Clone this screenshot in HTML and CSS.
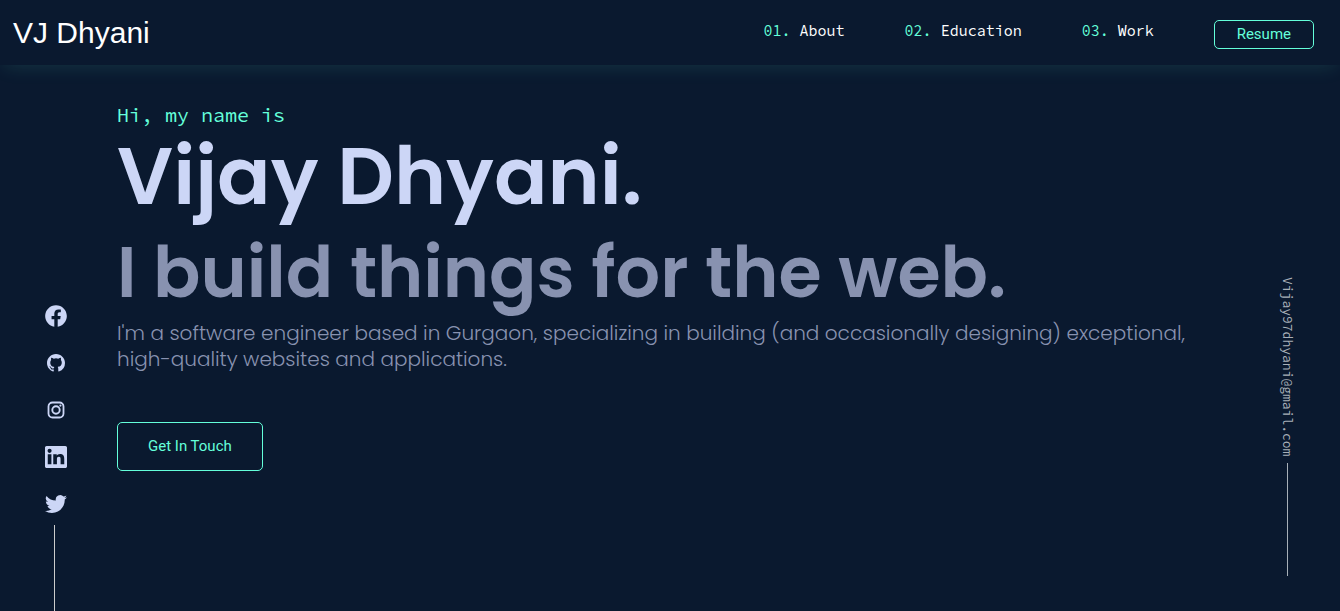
FILE: index.html
```html
<!DOCTYPE html>
<html lang="en">
<head>
<meta charset="utf-8">
<meta name="viewport" content="width=device-width, initial-scale=1">
<title>VJ Dhyani</title>
<link rel="stylesheet" href="styles.css">
</head>
<body>
<header class="header">
  <a class="logo" href="#">VJ Dhyani</a>
  <nav class="nav">
    <a class="nav-link" href="#about"><span class="nav-number">01.</span> About</a>
    <a class="nav-link" href="#education"><span class="nav-number">02.</span> Education</a>
    <a class="nav-link" href="#work"><span class="nav-number">03.</span> Work</a>
    <button class="button button-small" type="button">Resume</button>
  </nav>
</header>
<div class="page">
  <aside class="social">
    <a class="social-link" href="#" aria-label="Facebook"><svg width="26" height="26" viewBox="0 0 24 24"><path d="M12.001 2.002c-5.522 0-9.999 4.477-9.999 9.999 0 4.990 3.656 9.126 8.437 9.879v-6.988h-2.540v-2.891h2.540V9.798c0-2.508 1.493-3.891 3.776-3.891 1.094 0 2.240.195 2.240.195v2.459h-1.264c-1.240 0-1.628.772-1.628 1.563v1.875h2.771l-.443 2.891h-2.328v6.988C18.344 21.129 22 16.992 22 12.001c0-5.522-4.477-9.999-9.999-9.999z"/></svg></a>
    <a class="social-link" href="#" aria-label="GitHub"><svg width="18" height="18" viewBox="0 0 16 16"><path d="M8 0C3.580 0 0 3.580 0 8c0 3.540 2.290 6.530 5.470 7.590.4.070.55-.17.55-.38 0-.19-.01-.82-.01-1.490-2.010.37-2.530-.49-2.690-.94-.09-.23-.48-.94-.82-1.130-.28-.15-.68-.52-.01-.53.63-.01 1.080.58 1.230.82.72 1.210 1.870.87 2.330.66.070-.52.28-.87.51-1.070-1.780-.2-3.640-.89-3.640-3.950 0-.87.31-1.590.82-2.150-.08-.2-.36-1.020.08-2.120 0 0 .67-.21 2.200.82a7.600 7.600 0 0 1 4 0c1.530-1.040 2.200-.82 2.200-.82.44 1.100.16 1.920.08 2.120.51.56.82 1.270.82 2.150 0 3.070-1.870 3.750-3.650 3.950.29.25.54.73.54 1.480V15.200c0 .21.15.46.55.38A8.010 8.010 0 0 0 16 8c0-4.420-3.580-8-8-8z"/></svg></a>
    <a class="social-link" href="#" aria-label="Instagram"><svg width="26" height="26" viewBox="0 0 26 26"><rect x="5.500" y="5.500" width="15" height="15" rx="4" fill="none" stroke="currentColor" stroke-width="1.800"/><circle cx="13" cy="13" r="3.700" fill="none" stroke="currentColor" stroke-width="1.900"/><circle cx="17.400" cy="8.600" r="1.100"/></svg></a>
    <a class="social-link" href="#" aria-label="LinkedIn"><svg width="22" height="22" viewBox="0 0 24 24"><path d="M22.200 0H1.800C.8 0 0 .8 0 1.700v20.600c0 .9.8 1.700 1.800 1.700h20.400c1 0 1.800-.8 1.800-1.700V1.700C24 .8 23.200 0 22.200 0zM7 20H3V9h4v11zM5 7.500a2.200 2.200 0 1 1 0-4.500 2.200 2.200 0 0 1 0 4.500zM21 20h-4v-5.400c0-1.400 0-2.900-1.900-2.900s-2.100 1.400-2.100 2.900V20H9V9h3.800v1.500c.6-1 1.800-1.800 3.600-1.800 3.800 0 4.600 2.400 4.600 5.500V20z"/></svg></a>
    <a class="social-link" href="#" aria-label="Twitter"><svg width="22" height="22" viewBox="0 0 24 24"><path d="M24 4.557a9.830 9.830 0 0 1-2.828.775 4.932 4.932 0 0 0 2.165-2.724 9.864 9.864 0 0 1-3.127 1.195 4.916 4.916 0 0 0-8.384 4.482A13.944 13.944 0 0 1 1.671 3.149a4.916 4.916 0 0 0 1.523 6.574 4.903 4.903 0 0 1-2.229-.616c-.054 2.281 1.581 4.415 3.949 4.890a4.935 4.935 0 0 1-2.224.084 4.928 4.928 0 0 0 4.600 3.419A9.900 9.900 0 0 1 0 19.540a13.940 13.940 0 0 0 7.548 2.212c9.142 0 14.307-7.721 13.995-14.646A10.025 10.025 0 0 0 24 4.557z"/></svg></a>
    <span class="social-line"></span>
  </aside>
  <main class="hero">
    <p class="greeting">Hi, my name is</p>
    <h1 class="name">Vijay Dhyani.</h1>
    <h2 class="tagline">I build things for the web.</h2>
    <p class="intro">I'm a software engineer based in Gurgaon, specializing in building (and occasionally designing) exceptional, high-quality websites and applications.</p>
    <button class="button button-large" type="button">Get In Touch</button>
  </main>
  <aside class="contact">
    <a class="email" href="mailto:Vijay97dhyani@gmail.com">Vijay97dhyani@gmail.com</a>
    <span class="contact-line"></span>
  </aside>
</div>
</body>
</html>
```
FILE: styles.css
```css
* {
  box-sizing: border-box;
}

body {
  margin: 0;
  min-height: 100vh;
  display: flex;
  flex-direction: column;
  background: #0a192f;
  color: #ccd6f6;
  font-family: Poppins, Inter, sans-serif;
}

a {
  color: inherit;
  text-decoration: none;
}

h1, h2, p {
  margin: 0;
}

.header {
  display: flex;
  justify-content: space-between;
  align-items: flex-start;
  min-height: 65px;
  padding: 0 26px 0 13px;
  box-shadow: 0 5px 20px -4px rgba(100, 255, 218, 0.13);
}

.logo {
  padding-top: 15px;
  color: #fff;
  font: 30px/36px "Liberation Sans", Arial, sans-serif;
}

.nav {
  display: flex;
  align-items: flex-start;
  gap: 60px;
  padding-top: 20px;
}

.nav-link {
  color: #fff;
  font: 15px/22px "Source Code Pro", "Liberation Mono", monospace;
}

.nav-number {
  color: #64ffda;
}

.button {
  border: 1px solid #64ffda;
  border-radius: 5px;
  background: transparent;
  color: #64ffda;
  font: 15px/17px Roboto, sans-serif;
  cursor: pointer;
}

.button-small {
  padding: 5px 22px;
}

.button-large {
  margin-top: 50px;
  padding: 15px 30px;
}

.page {
  flex: 1;
  display: grid;
  grid-template-columns: 117px 1fr 80px;
}

.social {
  display: flex;
  flex-direction: column;
  justify-content: flex-end;
  align-items: center;
  gap: 21px;
  padding-right: 5px;
}

.social-link {
  display: flex;
  align-items: center;
  justify-content: center;
  width: 26px;
  height: 26px;
}

.social-link svg {
  fill: currentColor;
}

.social-line {
  width: 1px;
  height: 86px;
  margin: -13px 3px 0 0;
  background: #ccc;
}

.hero {
  padding: 37px 60px 40px 0;
}

.greeting {
  color: #64ffda;
  font: 20px/26px "Source Code Pro", "Liberation Mono", monospace;
}

.name {
  font-size: 79px;
  font-weight: 600;
  line-height: 98px;
}

.tagline {
  color: #8892b0;
  font-size: 70px;
  font-weight: 600;
  line-height: 94px;
}

.intro {
  color: #8892b0;
  font-size: 20px;
  font-weight: 300;
  line-height: 26px;
}

.contact {
  display: flex;
  flex-direction: column;
  justify-content: flex-end;
  align-items: center;
  gap: 7px;
  padding: 0 0 35px 0;
  margin-right: 26px;
  color: #a8b0b8;
}

.email {
  writing-mode: vertical-rl;
  font: 13px/16px "Source Code Pro", "Liberation Mono", monospace;
}

.contact-line {
  width: 1px;
  height: 113px;
  background: #a8b0b8;
}
```
